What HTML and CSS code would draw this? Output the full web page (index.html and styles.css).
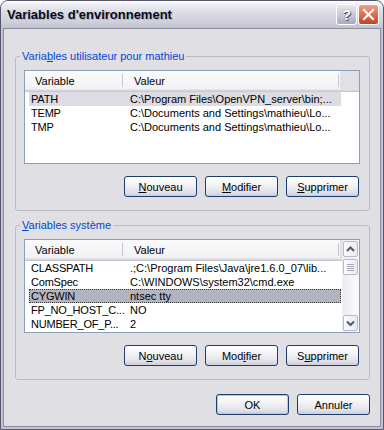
FILE: index.html
```html
<!DOCTYPE html>
<html lang="fr">
<head>
    <meta charset="UTF-8">
    <title>Variables d'environnement</title>
    <link rel="stylesheet" href="styles.css">
</head>
<body>
<div class="window">
    <div class="titlebar">
        <span class="title">Variables d'environnement</span>
        <div class="caption-btn help">?</div>
        <div class="caption-btn close">
            <svg width="13" height="13" viewBox="0 0 13 13">
                <path d="M2 2 L11 11 M11 2 L2 11" stroke="#fff" stroke-width="2.2" stroke-linecap="square"/>
            </svg>
        </div>
    </div>

    <div class="client">
        <fieldset class="group">
            <legend>Varia<u>b</u>les utilisateur pour mathieu</legend>
            <div class="listview">
                <div class="lv-body">
                    <div class="lv-header">
                        <div class="hcell col1">Variable</div>
                        <div class="hcell col2">Valeur</div>
                        <div class="hcell filler"></div>
                    </div>
                    <div class="row inactive"><span class="c1">PATH</span><span class="c2">C:\Program Files\OpenVPN_server\bin;...</span></div>
                    <div class="row"><span class="c1">TEMP</span><span class="c2">C:\Documents and Settings\mathieu\Lo...</span></div>
                    <div class="row"><span class="c1">TMP</span><span class="c2">C:\Documents and Settings\mathieu\Lo...</span></div>
                </div>
            </div>
            <div class="btn-row">
                <button class="btn"><u>N</u>ouveau</button>
                <button class="btn"><u>M</u>odifier</button>
                <button class="btn"><u>S</u>upprimer</button>
            </div>
        </fieldset>

        <fieldset class="group">
            <legend><u>V</u>ariables système</legend>
            <div class="listview">
                <div class="lv-body">
                    <div class="lv-header">
                        <div class="hcell col1">Variable</div>
                        <div class="hcell col2">Valeur</div>
                        <div class="hcell filler"></div>
                    </div>
                    <div class="row"><span class="c1">CLASSPATH</span><span class="c2">.;C:\Program Files\Java\jre1.6.0_07\lib...</span></div>
                    <div class="row"><span class="c1">ComSpec</span><span class="c2">C:\WINDOWS\system32\cmd.exe</span></div>
                    <div class="row selected"><span class="c1">CYGWIN</span><span class="c2">ntsec tty</span></div>
                    <div class="row"><span class="c1">FP_NO_HOST_C...</span><span class="c2">NO</span></div>
                    <div class="row"><span class="c1">NUMBER_OF_P...</span><span class="c2">2</span></div>
                </div>
                <div class="scrollbar">
                    <div class="sb-btn">
                        <svg width="13" height="14" viewBox="0 0 13 14"><path d="M3 9 L6.5 5.5 L10 9" fill="none" stroke="#4a5a7a" stroke-width="2"/></svg>
                    </div>
                    <div class="sb-btn thumb">
                        <svg width="9" height="8" viewBox="0 0 9 8"><path d="M1 1.5h7M1 3.5h7M1 5.5h7M1 7.5h7" stroke="#a6a9bb" stroke-width="1"/></svg>
                    </div>
                    <div class="sb-space"></div>
                    <div class="sb-btn down">
                        <svg width="13" height="14" viewBox="0 0 13 14"><path d="M3 5.5 L6.5 9 L10 5.5" fill="none" stroke="#4a5a7a" stroke-width="2"/></svg>
                    </div>
                </div>
            </div>
            <div class="btn-row">
                <button class="btn">N<u>o</u>uveau</button>
                <button class="btn">Mod<u>i</u>fier</button>
                <button class="btn">S<u>u</u>pprimer</button>
            </div>
        </fieldset>

        <div class="dlg-row">
            <button class="btn default">OK</button>
            <button class="btn">Annuler</button>
        </div>
    </div>
</div>
</body>
</html>
```

FILE: styles.css
```css
html, body {
    margin: 0;
}

body {
    background-color: #ffffff;
    font-family: "Liberation Sans", Arial, sans-serif;
    font-size: 11px;
    color: #000000;
}

.window {
    width: 384px;
    height: 430px;
    box-sizing: border-box;
    border: 1px solid #58586c;
    border-radius: 8px 8px 0 0;
    background-color: #c4c3d3;
    display: flex;
    flex-direction: column;
    overflow: hidden;
}

/* title bar */
.titlebar {
    height: 27px;
    flex: none;
    display: flex;
    align-items: center;
    padding: 0 4px 0 6px;
    background: linear-gradient(to bottom, #ffffff 0%, #ededf3 12%, #dcdce6 40%, #d1d1dc 75%, #c2c2d0 100%);
}

.title {
    flex: 1;
    font-size: 13px;
    font-weight: bold;
    color: #0a0a14;
    text-shadow: 1px 1px 0 #b4b4c4;
}

.caption-btn {
    width: 21px;
    height: 21px;
    box-sizing: border-box;
    border: 1px solid #ffffff;
    border-radius: 3px;
    margin-left: 1px;
    display: flex;
    align-items: center;
    justify-content: center;
}

.help {
    background: linear-gradient(to bottom, #e9e9f1, #c4c4d6 60%, #a9a9c0);
    color: #ffffff;
    font-size: 15px;
    font-weight: bold;
    text-shadow: 0 0 1px #3c3c55, 1px 1px 0 #55556e;
}

.close {
    background: linear-gradient(to bottom, #f0a28e, #dc6a50 55%, #c2432b);
}

/* client area */
.client {
    flex: 1;
    margin: 0 2px 2px;
    border: 1px solid #8c8ba0;
    background-color: #e0dfe3;
    padding: 21px 10px 0 11px;
}

.group {
    margin: 0;
    padding: 7px 9px 13px 8px;
    border: 1px solid #bcbbc4;
    border-radius: 3px;
    min-width: 0;
}

.group + .group {
    margin-top: 8px;
}

.group legend {
    padding: 0 2px;
    margin-left: -4px;
    line-height: 13px;
    color: #0046d5;
}

/* list view */
.listview {
    height: 94px;
    box-sizing: border-box;
    border: 1px solid #8f9db5;
    background-color: #ffffff;
    display: flex;
}

.lv-body {
    flex: 1;
    min-width: 0;
}

.lv-header {
    display: flex;
    height: 21px;
    background: linear-gradient(to bottom, #fbfbfc 0, #f2f2f5 18px, #e4e4ea 18px, #e4e4ea 19px, #d6d6dd 19px, #d6d6dd 20px, #c9c9d1 20px);
}

.hcell {
    height: 18px;
    box-sizing: border-box;
    padding: 2px 0 0 10px;
    display: flex;
    align-items: center;
    white-space: nowrap;
    background: linear-gradient(#c7c5d1, #c7c5d1) no-repeat right 1px top 3px / 1px 13px;
}

.col1 {
    width: 99px;
}

.col2 {
    width: 216px;
}

.filler {
    flex: 1;
    padding: 0;
    background: #e1e0e6;
}

.row {
    display: flex;
    height: 14px;
    align-items: center;
    width: 312px;
    margin-left: 4px;
    box-sizing: border-box;
    white-space: nowrap;
}

.row.inactive {
    background-color: #dcdce2;
}

.row.selected {
    background-color: #b2b4bf;
    outline: 1px dotted #3a3a3a;
    outline-offset: -1px;
}

.c1 {
    width: 95px;
    flex: none;
    padding-left: 2px;
    box-sizing: border-box;
    letter-spacing: -0.2px;
}

.c2 {
    flex: 1;
    padding-left: 6px;
    overflow: hidden;
}

/* scrollbar */
.scrollbar {
    width: 17px;
    flex: none;
    display: flex;
    flex-direction: column;
    background: linear-gradient(to right, #ececf1, #fbfbfc);
}

.sb-btn {
    height: 16px;
    margin: 1px 1px 0;
    box-sizing: border-box;
    border: 1px solid #b9bacb;
    border-radius: 2px;
    background: linear-gradient(to right, #fdfdfe, #e9e9f0);
    display: flex;
    align-items: center;
    justify-content: center;
}

.sb-btn.thumb {
    margin-top: 2px;
}

.sb-btn.down {
    margin-bottom: 1px;
}

.sb-space {
    flex: 1;
}

/* buttons */
.btn-row {
    display: flex;
    justify-content: flex-end;
    gap: 8px;
    margin-top: 12px;
    margin-right: 1px;
}

.dlg-row {
    display: flex;
    justify-content: flex-end;
    gap: 8px;
    margin-top: 14px;
}

.btn {
    width: 73px;
    height: 21px;
    padding: 0;
    box-sizing: border-box;
    border: 1px solid #1d3d6b;
    border-radius: 3px;
    background: linear-gradient(to bottom, #ffffff 0%, #f3f3f6 40%, #e1e1ea 80%, #cdcddb 100%);
    font-family: "Liberation Sans", Arial, sans-serif;
    font-size: 11px;
    color: #000000;
}

.btn.default {
    box-shadow: inset 0 0 0 1px #b6c6e6;
}
```
